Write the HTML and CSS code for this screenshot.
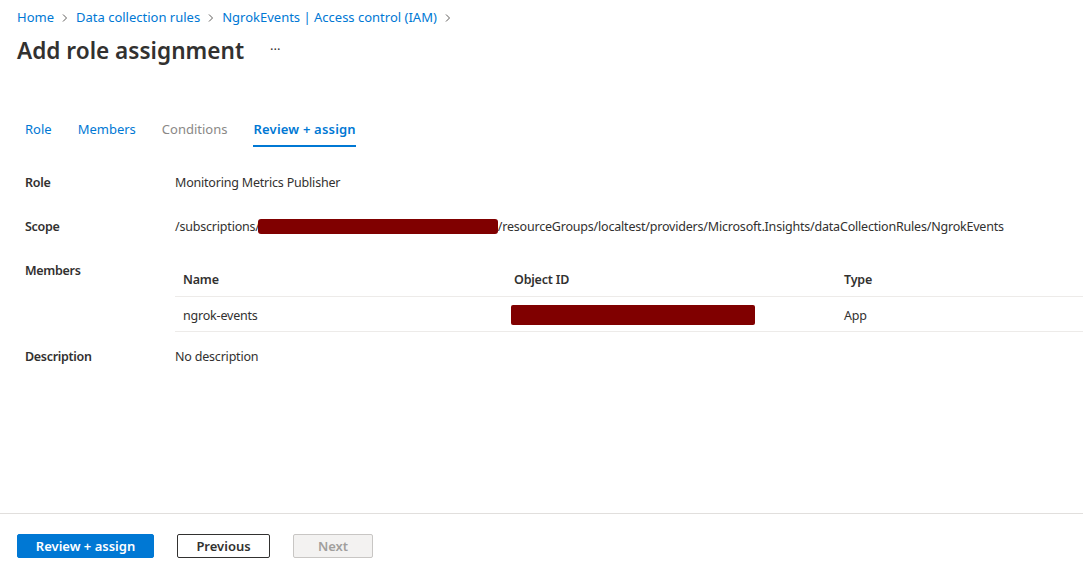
FILE: index.html
```html
<!DOCTYPE html>
<html>
<head>
<meta charset="utf-8">
<link rel="stylesheet" href="styles.css">
</head>
<body>
<div class="page">
  <div class="main">
    <nav class="crumbs">
      <a>Home</a><span class="chev"><svg width="10" height="10" viewBox="0 0 10 10"><path d="M3 1.5 L6.5 5 L3 8.5" fill="none" stroke="#605e5c" stroke-width="1"/></svg></span>
      <a>Data collection rules</a><span class="chev"><svg width="10" height="10" viewBox="0 0 10 10"><path d="M3 1.5 L6.5 5 L3 8.5" fill="none" stroke="#605e5c" stroke-width="1"/></svg></span>
      <a>NgrokEvents | Access control (IAM)</a><span class="chev"><svg width="10" height="10" viewBox="0 0 10 10"><path d="M3 1.5 L6.5 5 L3 8.5" fill="none" stroke="#605e5c" stroke-width="1"/></svg></span>
    </nav>
    <div class="titlebar">
      <h1>Add role assignment</h1>
      <span class="more">···</span>
    </div>
    <div class="tabs">
      <span class="tab">Role</span>
      <span class="tab">Members</span>
      <span class="tab disabled">Conditions</span>
      <span class="tab active">Review + assign</span>
    </div>
    <div class="details">
      <div class="row">
        <div class="label">Role</div>
        <div class="value">Monitoring Metrics Publisher</div>
      </div>
      <div class="row">
        <div class="label">Scope</div>
        <div class="value">/subscriptions/<span class="redact scope-redact"></span>/resourceGroups/localtest/providers/Microsoft.Insights/dataCollectionRules/NgrokEvents</div>
      </div>
      <div class="row members">
        <div class="label">Members</div>
        <div class="table">
          <div class="thead">
            <div class="c1">Name</div>
            <div class="c2">Object ID</div>
            <div class="c3">Type</div>
          </div>
          <div class="trow">
            <div class="c1">ngrok-events</div>
            <div class="c2"><span class="redact id-redact"></span></div>
            <div class="c3">App</div>
          </div>
        </div>
      </div>
      <div class="row desc">
        <div class="label">Description</div>
        <div class="value">No description</div>
      </div>
    </div>
  </div>
  <footer class="footer">
    <button class="btn primary">Review + assign</button>
    <button class="btn outline">Previous</button>
    <button class="btn disabledbtn">Next</button>
  </footer>
</div>
</body>
</html>
```
FILE: styles.css
```css
* { box-sizing: border-box; }
html, body { margin: 0; padding: 0; }
body {
  width: 1083px;
  height: 576px;
  overflow: hidden;
  font-family: "Noto Sans", "Open Sans", sans-serif;
  font-size: 13px;
  color: #323130;
  background: #fff;
}
.page {
  height: 576px;
  display: flex;
  flex-direction: column;
}
.main { flex: 1; }
.crumbs {
  display: flex;
  align-items: center;
  padding: 8px 0 0 17px;
  height: 26px;
  font-size: 13px;
}
.crumbs a { color: #0078d4; }
.chev { display: inline-flex; width: 22px; justify-content: center; margin-top: 1px; }
.titlebar {
  display: flex;
  align-items: center;
  padding: 2px 0 0 17px;
  height: 47px;
}
h1 {
  margin: 0;
  font-size: 22.6px;
  font-weight: 600;
  color: #323130;
}
.more { margin-left: 26px; font-size: 13px; color: #323130; margin-top: -4px; }
.tabs {
  display: flex;
  gap: 26px;
  padding: 42px 0 0 25px;
}
.tab {
  color: #0078d4;
  font-size: 13px;
  height: 32px;
  line-height: 28px;
  border-bottom: 2px solid transparent;
}
.tab.disabled { color: #8a8886; }
.tab.active { font-weight: 600; border-bottom-color: #0078d4; letter-spacing: 0.2px; }
.details {
  padding: 10px 0 0 25px;
  font-size: 12.5px;
  letter-spacing: -0.2px;
}
.row {
  display: flex;
  min-height: 44px;
  line-height: 24px;
  align-items: flex-start;
}
.label { width: 150px; font-weight: 600; color: #323130; padding-top: 14px; letter-spacing: -0.3px; }
.value { padding-top: 14px; color: #323130; white-space: nowrap; }
.redact { display: inline-block; background: #800000; vertical-align: middle; }
.scope-redact { width: 240px; height: 15px; border-radius: 3px; margin: -3px 0 0 -2px; }
.table { flex: 1; padding-top: 17px; }
.thead, .trow {
  display: flex;
  height: 35px;
  align-items: center;
  border-bottom: 1px solid #edebe9;
  padding-left: 8px;
}
.thead { font-weight: 600; padding-top: 1px; }
.trow { padding-top: 3px; }
.trow .c2 { margin-top: -3px; }
.c1 { width: 331px; }
.c2 { width: 330px; }
.id-redact { width: 244px; height: 20px; border-radius: 2px; margin-left: -3px; }
.row.members .label { padding-top: 14px; }
.row.desc .value, .row.desc .label { padding-top: 13px; }
.footer {
  height: 63px;
  border-top: 1px solid #e1dfdd;
  display: flex;
  align-items: flex-start;
  padding: 20px 0 0 17px;
  gap: 23px;
}
.btn {
  height: 24px;
  font-family: inherit;
  font-size: 13px;
  font-weight: 600;
  padding: 0;
  border-radius: 2px;
}
.primary { width: 137px; background: #0078d4; color: #fff; border: 1px solid #0078d4; }
.outline { width: 93px; background: #fff; color: #323130; border: 1px solid #323130; }
.disabledbtn { width: 80px; background: #f3f2f1; color: #a19f9d; border: 1px solid #c8c6c4; }
```
